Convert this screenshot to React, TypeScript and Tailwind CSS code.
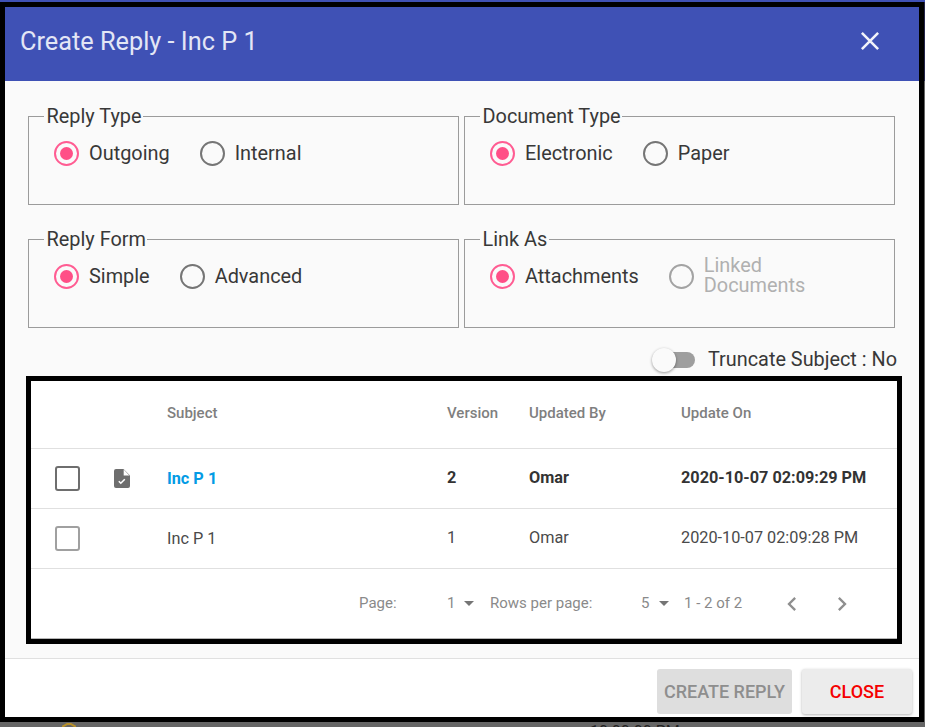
const font = { fontFamily: "Roboto, sans-serif" };

function Radio({ label, checked, disabled }: { label: string; checked?: boolean; disabled?: boolean }) {
  const ring = checked ? "border-[#ff5c92]" : disabled ? "border-[#a3a3a3]" : "border-[#757575]";
  return (
    <div className={`flex items-center gap-[10px] ${disabled ? "text-[#b0b0b0]" : "text-[#383838]"}`}>
      <span className={`flex h-[25px] w-[25px] shrink-0 items-center justify-center rounded-full border-2 ${ring}`}>
        {checked && <span className="h-[13px] w-[13px] rounded-full bg-[#ff4f87]" />}
      </span>
      <span className={`whitespace-pre-line text-[19.9px] leading-[20px] ${disabled ? "" : "pt-[2px]"}`}>{label}</span>
    </div>
  );
}

function Group({ title, children }: { title: string; children: React.ReactNode }) {
  return (
    <fieldset className="h-[99px] min-w-0 border border-[#9b9b9b]">
      <legend className="ml-[15px] pl-[2.5px] pr-[1.5px] text-[19.9px] leading-[20px] text-[#383838]">
        <span className="block translate-y-px">{title}</span>
      </legend>
      <div className="flex h-[54px] items-center gap-[30px] pl-[25px]">{children}</div>
    </fieldset>
  );
}

function Caret({ className }: { className: string }) {
  return <span className={`h-0 w-0 border-x-[5px] border-t-[5px] border-x-transparent border-t-[#757575] ${className}`} />;
}

function FileCheck() {
  return (
    <svg viewBox="0 0 16 19" width="16" height="19">
      <path d="M2 0h7.5L16 6.5V17a2 2 0 0 1-2 2H2a2 2 0 0 1-2-2V2a2 2 0 0 1 2-2z" fill="#6e6e6e" />
      <path d="M9.7 .6v5.9h5.7z" fill="#ffffff" />
      <path d="M4.8 12.2l2 2 4-4" fill="none" stroke="#ffffff" strokeWidth="1.6" />
    </svg>
  );
}

function Row({ bold, box, date, version }: { bold?: boolean; box: string; date: string; version: string }) {
  const weight = bold ? "font-bold text-[#333333]" : "text-[#4a4a4a]";
  return (
    <div className="flex h-[60px] items-center border-b border-[#e0e0e0] text-[16.25px]">
      <span className={`ml-[24px] h-[25px] w-[25px] rounded-[3px] border-2 ${box}`} />
      <div className="ml-[26px] flex w-[32px] justify-center">{bold && <FileCheck />}</div>
      <span className={`ml-[29px] w-[280px] pt-[2px] ${bold ? "font-bold text-[#039be5]" : "text-[#4a4a4a]"}`}>Inc P 1</span>
      <span className={`w-[82px] ${weight}`}>{version}</span>
      <span className={`w-[152px] ${weight}`}>Omar</span>
      <span className={`whitespace-nowrap ${weight}`}>{date}</span>
    </div>
  );
}

export default function App() {
  return (
    <div className="h-[727px] w-[925px] overflow-hidden bg-[#666666]" style={font}>
      <div className="h-[2px] bg-[#3f51b5]" />
      <div className="flex">
        <div className="h-[720px] w-[924px] shrink-0 border-[5px] border-black">
          <div className="flex h-[74px] items-center justify-between bg-[#3f51b5] pb-[6px] pl-[15px] pr-[34px]">
            <h1 className="translate-y-px text-[25.3px] font-normal text-[#e3e6f5]">Create Reply - Inc P 1</h1>
            <svg viewBox="0 0 24 24" width="30" height="30" fill="none" stroke="#f2f3fa" strokeWidth="2">
              <path d="M5.5 5.5l13 13M18.5 5.5l-13 13" />
            </svg>
          </div>

          <div className="h-[577px] bg-[#fafafa] px-[23px] pt-[25px]">
            <div className="grid grid-cols-[431px_431px] gap-x-[5px] gap-y-[24px]">
              <Group title="Reply Type">
                <Radio label="Outgoing" checked />
                <Radio label="Internal" />
              </Group>
              <Group title="Document Type">
                <Radio label="Electronic" checked />
                <Radio label="Paper" />
              </Group>
              <Group title="Reply Form">
                <Radio label="Simple" checked />
                <Radio label="Advanced" />
              </Group>
              <Group title="Link As">
                <Radio label="Attachments" checked />
                <Radio label={"Linked\nDocuments"} disabled />
              </Group>
            </div>

            <div className="mt-[18px] -mr-[1px] flex h-[28px] items-center justify-end">
              <div className="relative h-[16px] w-[34px] -translate-x-px rounded-full bg-[#9e9e9e]">
                <span className="absolute -left-[9px] -top-[4px] h-[24px] w-[24px] rounded-full bg-[#fafafa] shadow-[0_1px_3px_rgba(0,0,0,0.4)]" />
              </div>
              <span className="ml-[12px] text-[19.85px] text-[#383838]">Truncate Subject : No</span>
            </div>

            <div className="-ml-[2px] mt-[2px] h-[268px] w-[876px] border-[5px] border-black bg-white">
              <div className="flex h-[68px] items-center border-b border-[#e0e0e0] pb-[2px] text-[15px] font-medium text-[#7f7f7f]">
                <span className="ml-[136px] w-[280px]">Subject</span>
                <span className="w-[82px]">Version</span>
                <span className="w-[152px]">Updated By</span>
                <span>Update On</span>
              </div>
              <Row bold box="border-[#6e6e6e]" version="2" date="2020-10-07 02:09:29 PM" />
              <Row box="border-[#a0a0a0]" version="1" date="2020-10-07 02:09:28 PM" />
              <div className="flex h-[70px] items-center border-b border-[#b5b5b5] text-[15px] text-[#8a8a8a]">
                <span className="ml-[328px] w-[88px]">Page:</span>
                <span className="w-[7px]">1</span>
                <Caret className="ml-[10px]" />
                <span className="ml-[16px] w-[151px]">Rows per page:</span>
                <span className="w-[8px]">5</span>
                <Caret className="ml-[10px]" />
                <span className="ml-[15px] w-[94px]">1 - 2 of 2</span>
                <svg viewBox="0 0 24 24" width="28" height="28" fill="#8f8f8f">
                  <path d="M15.41 7.41L14 6l-6 6 6 6 1.41-1.41L10.83 12z" />
                </svg>
                <svg viewBox="0 0 24 24" width="28" height="28" fill="#8f8f8f" className="ml-[22px]">
                  <path d="M8.59 16.59L10 18l6-6-6-6-1.41 1.41L13.17 12z" />
                </svg>
              </div>
            </div>
          </div>

          <div className="flex h-[59px] items-start justify-end gap-[10px] border-t border-[#e0e0e0] bg-white pr-[7px] pt-[10px]">
            <button className="h-[45px] w-[135px] rounded-[3px] bg-[#dedede] text-[18px] font-medium text-[#8e8e8e]">CREATE REPLY</button>
            <button className="h-[45px] w-[110px] rounded-[3px] bg-[#ececec] text-[18px] font-medium text-[#f50000] shadow-[0_1px_3px_rgba(0,0,0,0.3)]">CLOSE</button>
          </div>
        </div>
        <div className="w-[1px]">
          <div className="h-[79px] bg-[#24244a]" />
        </div>
      </div>
      <div className="flex h-[5px] overflow-hidden pt-[1px]">
        <svg viewBox="0 0 14 4" width="14" height="4" className="ml-[62px]">
          <path d="M0 4L7 0l7 4" fill="none" stroke="#b8902a" strokeWidth="2" />
        </svg>
        <span className="ml-[514px] text-[16px] leading-[18px] text-[#222222]">10:00:00 PM</span>
      </div>
    </div>
  );
}
